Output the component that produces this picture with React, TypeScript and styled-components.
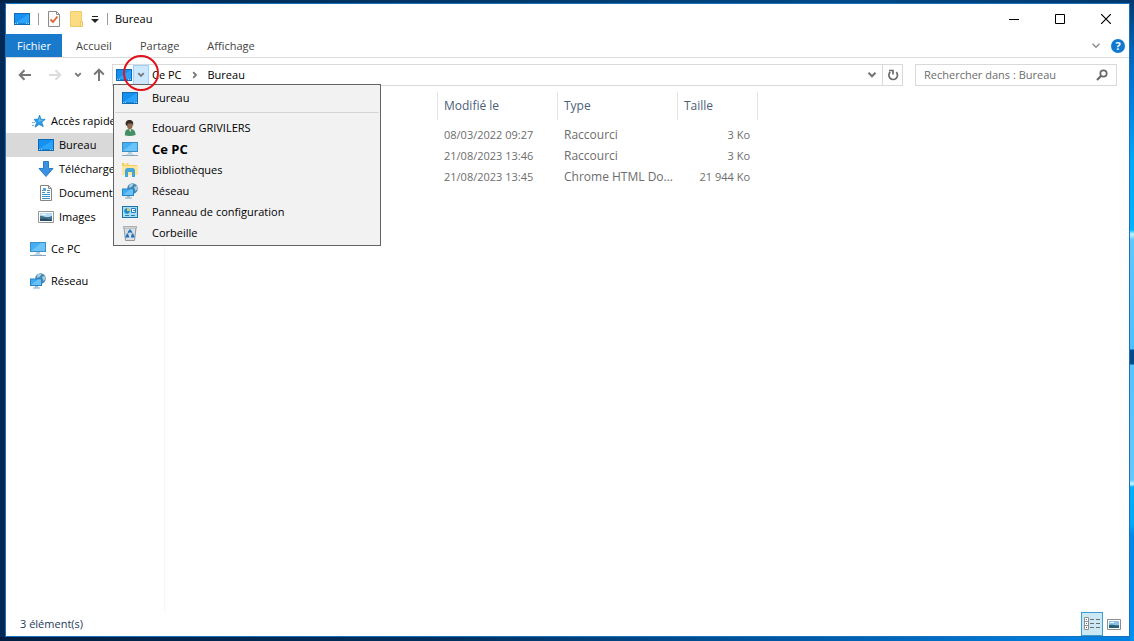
import React from 'react';
import styled, { createGlobalStyle, css } from 'styled-components';

const GlobalStyle = createGlobalStyle`
  *, *::before, *::after { box-sizing: border-box; }
  body {
    margin: 0;
    font-family: "Open Sans", "Noto Sans", sans-serif;
    font-size: 11px;
    line-height: 20px;
    color: #000;
  }
  button, input { font: inherit; color: inherit; }
  svg { display: block; flex: none; }
`;

/* ---------- icons ---------- */

const Svg = ({ w = 16, h = 16, children, box }: { w?: number; h?: number; box?: string; children: React.ReactNode }) => (
  <svg width={w} height={h} viewBox={box ?? `0 0 ${w} ${h}`} fill="none" aria-hidden="true">{children}</svg>
);

const DesktopIcon = () => (
  <Svg>
    <path d="M0 2h16v12H0z" fill="#0f6cb4" />
    <path d="M1 3h14v9H1z" fill="#1690f0" />
    <path d="M1 12L15 3v9z" fill="#2ba3fa" />
    <path d="M1 12.500h14" stroke="#1b86d6" />
    <path d="M1 12.500h1M3 12.500h1M12 12.500h1M14 12.500h1" stroke="#9fd6fb" />
  </Svg>
);

const MonitorIcon = () => (
  <Svg>
    <path d="M0 1h16v10H0z" fill="#3c8fc4" />
    <path d="M1 2h14v8H1z" fill="#45aef4" />
    <path d="M1 10L11 2h4v8z" fill="#6bc3fa" />
    <path d="M6 11h4v2H6z" fill="#b7d0de" />
    <path d="M4 13.500h8" stroke="#c8dbe5" />
    <path d="M0 14.500h16" stroke="#86a8bf" />
  </Svg>
);

const StarIcon = () => (
  <Svg>
    <path d="M9.600 2l1.200 4.200 4.400.2-3.500 2.600 1.600 4.600-4.200-2.200-4 2.800 1.400-4.500L4.200 6.400l4-.3z" fill="#2c9de8" stroke="#1e80c6" strokeWidth=".8" />
    <path d="M9.400 4l.8 2.800 3 .3-5 2z" fill="#67c3fa" />
    <path d="M2 9.500h3M2 12.500h2" stroke="#77b9e5" />
  </Svg>
);

const DownloadIcon = () => (
  <Svg>
    <path d="M5.500 .5h5v7h4.500L8 15.500 1 7.500h4.500z" fill="#3b90df" stroke="#2b7bcb" />
  </Svg>
);

const DocumentIcon = () => (
  <Svg>
    <path d="M2.500 .5h8l3 3v12h-11z" fill="#fff" stroke="#858585" />
    <path d="M10.500 .5v3h3" stroke="#858585" />
    <path d="M4 5.500h3M9 5.500h3M4 7.500h3M9 7.500h3M4 9.500h8M4 11.500h8M4 13.500h8" stroke="#3f94cb" />
    <path d="M5 3h3v3H5z" fill="#59a9d8" />
  </Svg>
);

const ImageIcon = () => (
  <Svg>
    <path d="M.5 2.500h15v11H.5z" fill="#fff" stroke="#979797" />
    <path d="M2 4h12v8H2z" fill="#b7dcf3" />
    <path d="M2 7c3-1 4 1 6 1s4 0 6-1v5H2z" fill="#42728d" />
    <path d="M2 10c4-1 8 0 12 1v1H2z" fill="#274f6b" />
    <path d="M3 5h5v1H3z" fill="#effaff" />
  </Svg>
);

const NetworkIcon = () => (
  <Svg>
    <circle cx="10.500" cy="5.500" r="5.300" fill="#4a88b0" />
    <path d="M7 2.500c2-2 3.500-1.700 4.500-1.500L10 3.500 7.500 5zM12 4l3-1 .5 3-2 2z" fill="#a7d0e5" />
    <path d="M0 5.500h12v7.500H0z" fill="#2883c2" />
    <path d="M1 6.500h10V12H1z" fill="#3fabf2" />
    <path d="M1 12l7-5.500h3V12z" fill="#68c1f9" />
    <path d="M5 13h3v1.500H5z" fill="#9cbdd1" />
    <path d="M3 15h7" stroke="#82a6bd" />
  </Svg>
);

const UserIcon = () => (
  <Svg>
    <path d="M3 15.500c-.4-4 .6-6 3.500-6.500h3c3 .5 4 2.500 4 6 -3 1-7 1.200-10.500.5z" fill="#429064" />
    <path d="M6 8h3.500l-1 4z" fill="#e6e7df" />
    <path d="M5 2h5.500v4.500c-.5 2-1.500 3-2.800 3S5.300 8 5 6z" fill="#93694f" />
    <path d="M3.800 5C3 1.500 5 0 7.500 0S12 1.500 11 6l-1-2.500H6L5 6z" fill="#392d28" />
  </Svg>
);

const LibraryIcon = () => (
  <Svg>
    <path d="M0 1h6l1 2h8v10H0z" fill="#f4cd60" />
    <path d="M0 4h16v9H0z" fill="#ffe59a" />
    <path d="M2 2h3" stroke="#fff" />
    <path d="M3 15V8.500C3 7 4 6 5.500 6h5C12 6 13 7 13 8.500V15h-3v-5H6v5z" fill="#40a6dc" />
  </Svg>
);

const ControlPanelIcon = () => (
  <Svg>
    <path d="M0 2h16v12H0z" fill="#1b75ac" />
    <path d="M1 3h14v10H1z" fill="#a9dcf5" />
    <circle cx="5" cy="7" r="2.700" fill="#1689cf" />
    <path d="M5 7V4.300A2.700 2.700 0 0 1 7.700 7z" fill="#ffc643" />
    <path d="M9.500 4.500h4v4h-4z" fill="#f1fbff" stroke="#267fb4" />
    <path d="M11 6.500h2M3 11.500h4M9 11.500h4" stroke="#267fb4" />
  </Svg>
);

const BinIcon = () => (
  <Svg>
    <path d="M2 2.500h12L12.500 15.500h-9z" fill="#dadfe3" stroke="#92989c" />
    <path d="M1.500 1.500h13v1.500h-13z" fill="#f7f8f8" stroke="#989da0" strokeWidth=".8" />
    <path d="M6.200 7.800L8 5.500l1.800 2.300M5.800 8.700L4.500 11.500h2.600M10.200 8.700l1.300 2.800H9" stroke="#1d74bd" strokeWidth="1.800" />
  </Svg>
);

const PropertiesIcon = () => (
  <Svg w={14}>
    <path d="M1.500 .5h8l3 3v12h-11z" fill="#fbfbfb" stroke="#8b8b8b" />
    <path d="M9.500 .5v3h3" stroke="#8b8b8b" />
    <path d="M3.500 8.500L6 11l4.500-5.500" stroke="#dc6232" strokeWidth="1.800" />
  </Svg>
);

const FolderIcon = () => (
  <Svg w={14}>
    <path d="M1.500 .5h11v10h1v5h-12z" fill="#fbdc82" stroke="#f0cb68" />
    <path d="M11.500 15.500v-4.500h2v4.500z" fill="#fff1bc" stroke="#e8bf53" strokeWidth=".8" />
  </Svg>
);

const CustomizeIcon = () => (
  <Svg w={8} h={8}>
    <path d="M1 1.500h6" stroke="#222" />
    <path d="M0 4h8L4 8z" fill="#222" />
  </Svg>
);

const ArrowIcon = ({ dir, color = '#777' }: { dir: 'left' | 'right' | 'up'; color?: string }) => (
  <Svg w={14} h={14}>
    <path
      transform={dir === 'right' ? 'rotate(180 7 7)' : dir === 'up' ? 'rotate(90 7 7)' : undefined}
      d="M13 7H2M6.500 2.200L1.700 7l4.800 4.800"
      stroke={color}
      strokeWidth="2"
    />
  </Svg>
);

const Chevron = ({ size = 8, color = '#777', weight = 1.8, right = false }: { size?: number; color?: string; weight?: number; right?: boolean }) => (
  <Svg w={size} h={size} box="0 0 8 8">
    <path transform={right ? 'rotate(-90 4 4)' : undefined} d="M1.200 2.200L4 5l2.800-2.800" stroke={color} strokeWidth={weight} />
  </Svg>
);

const RefreshIcon = () => (
  <Svg w={12} h={12}>
    <path d="M9.300 3.200A4.300 4.300 0 1 1 3.300 3" stroke="#6b6b6b" strokeWidth="1.700" />
    <path d="M2 1.500h4v4" stroke="#6b6b6b" strokeWidth="1.700" />
  </Svg>
);

const SearchIcon = () => (
  <Svg w={12} h={12}>
    <circle cx="7.500" cy="4.500" r="3.200" stroke="#666" strokeWidth="1.700" />
    <path d="M5.200 6.800L1 11" stroke="#666" strokeWidth="2" />
  </Svg>
);

const DetailsIcon = () => (
  <Svg h={14}>
    <path d="M.5 .5h4v12h-4zM.5 4.500h4M.5 8.500h4" fill="#fff" stroke="#909090" />
    <path d="M2 2.500h1M2 6.500h1" stroke="#4b7196" />
    <path d="M2 10.500h1" stroke="#b44141" />
    <path d="M6 2.500h4M12 2.500h4M6 6.500h4M12 6.500h4M6 10.500h4M12 10.500h4" stroke="#6e6e6e" />
  </Svg>
);

const ThumbnailIcon = () => (
  <Svg w={14} h={11}>
    <path d="M.5 .5h13v10H.5z" fill="#fff" stroke="#8d8d8d" />
    <path d="M2 2h10v7H2z" fill="#8ac2ed" />
    <path d="M2 6c4-1 6 1 10 0v3H2z" fill="#286078" />
    <path d="M3 3h4v1H3z" fill="#f2fbff" />
  </Svg>
);

/* ---------- frame ---------- */

const Desktop = styled.div`
  display: flex;
  min-height: 100vh;
  padding: 3px 4px 4px 5px;
  background:
    linear-gradient(#003a70, #0063b5 50px, #0078d7 90px, #00a8f8 160px, #00b4ff 230px, #c5f3ff 234px, #62c6ff 240px, #4cc0ff 349px, #074a8c 350px, #074a8c 364px, #55c4ff 365px, #66c5ff 480px, #d2f6ff 484px, #00b0fa 487px, #00a8f5 525px, #0088e8 535px, #0090f0) right / 4px 100% no-repeat,
    linear-gradient(90deg, #001f42, #00305f 40%, #0058a5 70%, #0080e0 95%) bottom / 100% 4px no-repeat,
    linear-gradient(90deg, #00254a, #003c70 50%, #004a88 75%, #00386c) top / 100% 3px no-repeat,
    #002a55;
`;

const Window = styled.main`
  display: flex;
  flex: 1;
  flex-direction: column;
  min-width: 0;
  background: #fff;
  border: 1px solid #1a72bd;
`;

const TitleBar = styled.header`
  display: flex;
  align-items: center;
  height: 30px;
  padding-left: 8px;
`;

const QuickTools = styled.div`
  display: flex;
  align-items: center;
  gap: 8px;
`;

const Separator = styled.span`
  width: 1px;
  height: 12px;
  background: #999;
`;

const PlainButton = styled.button`
  display: flex;
  align-items: center;
  justify-content: center;
  padding: 0;
  background: none;
  border: 0;
`;

const Title = styled.h1`
  margin: 0 0 0 7px;
  font-size: 11px;
  font-weight: 400;
`;

const WindowControls = styled.div`
  display: flex;
  margin-left: auto;
`;

const ControlButton = styled(PlainButton)`
  width: 46px;
  height: 28px;
`;

const Ribbon = styled.nav`
  display: flex;
  align-items: center;
  height: 24px;
  border-bottom: 1px solid #dadbdc;
`;

const Tab = styled.button<{ $active?: boolean }>`
  height: 23px;
  padding: 0 14px;
  border: 0;
  background: none;
  color: #444;
  line-height: 23px;
  ${p => p.$active && css`
    padding: 0 11px;
    background: #1979ca;
    color: #fff;
  `}
`;

const RibbonEnd = styled.div`
  display: flex;
  align-items: center;
  gap: 10px;
  margin-left: auto;
  padding-right: 4px;
`;

const HelpButton = styled(PlainButton)`
  width: 14px;
  height: 14px;
  border-radius: 50%;
  background: #0f78d0;
  color: #fff;
  font-weight: 700;
  line-height: 14px;
`;

const NavBar = styled.div`
  display: flex;
  align-items: center;
  height: 34px;
  padding: 0 12px;
`;

const History = styled.div`
  display: flex;
  align-items: center;
  width: 94px;
`;

const HistoryButton = styled(PlainButton)<{ $w: number }>`
  width: ${p => p.$w}px;
  height: 22px;
  justify-content: flex-start;
`;

const AddressBar = styled.div`
  position: relative;
  display: flex;
  flex: 1;
  align-items: center;
  height: 22px;
  padding-left: 3px;
  border: 1px solid #d9d9d9;
`;

const RootButton = styled(PlainButton)`
  width: 16px;
  height: 20px;
  margin-left: 1px;
  background: #cce8ff;
  border: 1px solid #99d1ff;
`;

const Crumbs = styled.div`
  display: flex;
  align-items: center;
  gap: 9px;
  margin-left: 3px;
`;

const Crumb = styled.a`
  color: inherit;
  text-decoration: none;
`;

const AddressEnd = styled.div`
  display: flex;
  margin-left: auto;
`;

const AddressButton = styled(PlainButton)<{ $divided?: boolean }>`
  width: 20px;
  height: 20px;
  border-left: ${p => (p.$divided ? '1px solid #d9d9d9' : '0')};
`;

const SearchBox = styled.label`
  display: flex;
  align-items: center;
  width: 202px;
  height: 22px;
  margin-left: 12px;
  padding: 0 8px;
  border: 1px solid #d9d9d9;
`;

const SearchInput = styled.input`
  flex: 1;
  min-width: 0;
  padding: 0;
  border: 0;
  outline: 0;
  background: none;
  &::placeholder { color: #6d6d6d; opacity: 1; }
`;

const Highlight = styled.span`
  position: absolute;
  z-index: 3;
  top: -10px;
  left: 10px;
  width: 36px;
  height: 36px;
  border: 2px solid #e0121c;
  border-radius: 50%;
  pointer-events: none;
`;

const Menu = styled.ul`
  position: absolute;
  z-index: 2;
  top: 19px;
  left: 0;
  width: 268px;
  margin: 0;
  padding: 2px 1px;
  list-style: none;
  background: #f2f2f2;
  border: 1px solid #646464;
`;

const MenuRow = styled.li<{ $first?: boolean }>`
  ${p => p.$first && css`
    margin-bottom: 4px;
    padding-bottom: 4px;
    border-bottom: 1px solid #d4d4d4;
  `}
`;

const MenuButton = styled.button<{ $strong?: boolean }>`
  display: flex;
  align-items: center;
  gap: 14px;
  width: 100%;
  height: 21px;
  padding: 0 7px;
  border: 0;
  background: none;
  ${p => p.$strong && css`
    font-size: 13px;
    font-weight: 700;
  `}
`;

/* ---------- content ---------- */

const Content = styled.div`
  display: flex;
  flex: 1;
`;

const Sidebar = styled.nav`
  width: 159px;
  padding-top: 17px;
  border-right: 1px solid #f6f6f6;
`;

const SideGroup = styled.ul`
  margin: 0 0 8px;
  padding: 0;
  list-style: none;
`;

const SideLink = styled.a<{ $child?: boolean; $selected?: boolean }>`
  display: flex;
  align-items: center;
  gap: 5px;
  height: 24px;
  padding-left: ${p => (p.$child ? 32 : 24)}px;
  overflow: hidden;
  background: ${p => (p.$selected ? '#d9d9d9' : 'transparent')};
  color: inherit;
  text-decoration: none;
  white-space: nowrap;
`;

const Files = styled.section`
  flex: 1;
  min-width: 0;
`;

const FileTable = styled.table`
  width: 593px;
  table-layout: fixed;
  border-collapse: separate;
  border-spacing: 0;
  color: #6d6d6d;
`;

const HeadCell = styled.th`
  height: 28px;
  padding: 0 6px;
  border-right: 1px solid #e5e5e5;
  color: #4c607a;
  font-size: 12px;
  font-weight: 400;
  text-align: left;
`;

const Body = styled.tbody`
  &::before { content: ''; display: block; height: 4px; }
`;

const Cell = styled.td<{ $kind?: 'text' | 'number' }>`
  height: 21px;
  padding: 0 8px 0 6px;
  font-size: ${p => (p.$kind === 'text' ? 12 : 11)}px;
  text-align: ${p => (p.$kind === 'number' ? 'right' : 'left')};
  white-space: nowrap;
`;

const StatusBar = styled.footer`
  display: flex;
  align-items: center;
  height: 24px;
  padding: 0 4px 0 14px;
  color: #1e395b;
`;

const ViewButtons = styled.div`
  display: flex;
  margin-left: auto;
`;

const ViewButton = styled(PlainButton)<{ $active?: boolean }>`
  width: 22px;
  height: 24px;
  background: ${p => (p.$active ? '#cce8f5' : 'none')};
  border: ${p => (p.$active ? '1px solid #3a9ed0' : '0')};
`;

/* ---------- data ---------- */

const menuItems = [
  { label: 'Bureau', icon: <DesktopIcon /> },
  { label: 'Edouard GRIVILERS', icon: <UserIcon /> },
  { label: 'Ce PC', icon: <MonitorIcon />, strong: true },
  { label: 'Bibliothèques', icon: <LibraryIcon /> },
  { label: 'Réseau', icon: <NetworkIcon /> },
  { label: 'Panneau de configuration', icon: <ControlPanelIcon /> },
  { label: 'Corbeille', icon: <BinIcon /> },
];

const sideGroups = [
  [
    { label: 'Accès rapide', icon: <StarIcon /> },
    { label: 'Bureau', icon: <DesktopIcon />, child: true, selected: true },
    { label: 'Téléchargements', icon: <DownloadIcon />, child: true },
    { label: 'Documents', icon: <DocumentIcon />, child: true },
    { label: 'Images', icon: <ImageIcon />, child: true },
  ],
  [{ label: 'Ce PC', icon: <MonitorIcon /> }],
  [{ label: 'Réseau', icon: <NetworkIcon /> }],
];

const files = [
  { date: '08/03/2022 09:27', type: 'Raccourci', size: '3 Ko' },
  { date: '21/08/2023 13:46', type: 'Raccourci', size: '3 Ko' },
  { date: '21/08/2023 13:45', type: 'Chrome HTML Do...', size: '21 944 Ko' },
];

export default function App() {
  return (
    <Desktop>
      <GlobalStyle />
      <Window>
        <TitleBar>
          <QuickTools>
            <DesktopIcon />
            <Separator />
            <PlainButton aria-label="Propriétés"><PropertiesIcon /></PlainButton>
            <PlainButton aria-label="Nouveau dossier"><FolderIcon /></PlainButton>
            <PlainButton aria-label="Personnaliser"><CustomizeIcon /></PlainButton>
            <Separator />
          </QuickTools>
          <Title>Bureau</Title>
          <WindowControls>
            <ControlButton aria-label="Réduire"><Svg w={10} h={10}><path d="M0 5.500h10" stroke="#000" /></Svg></ControlButton>
            <ControlButton aria-label="Agrandir"><Svg w={10} h={10}><path d="M.5 .5h9v9h-9z" stroke="#000" /></Svg></ControlButton>
            <ControlButton aria-label="Fermer"><Svg w={10} h={10}><path d="M0 0l10 10M10 0L0 10" stroke="#000" strokeWidth="1.200" /></Svg></ControlButton>
          </WindowControls>
        </TitleBar>
        <Ribbon>
          <Tab $active>Fichier</Tab>
          <Tab>Accueil</Tab>
          <Tab>Partage</Tab>
          <Tab>Affichage</Tab>
          <RibbonEnd>
            <PlainButton aria-label="Développer le ruban"><Chevron size={10} color="#888" weight={1} /></PlainButton>
            <HelpButton aria-label="Aide">?</HelpButton>
          </RibbonEnd>
        </Ribbon>
        <NavBar>
          <History>
            <HistoryButton $w={30} aria-label="Précédent"><ArrowIcon dir="left" /></HistoryButton>
            <HistoryButton $w={26} aria-label="Suivant"><ArrowIcon dir="right" color="#dcdcdc" /></HistoryButton>
            <HistoryButton $w={18} aria-label="Emplacements récents"><Chevron /></HistoryButton>
            <HistoryButton $w={20} aria-label="Dossier parent"><ArrowIcon dir="up" /></HistoryButton>
          </History>
          <AddressBar>
            <DesktopIcon />
            <RootButton aria-label="Emplacements" aria-expanded="true"><Chevron /></RootButton>
            <Crumbs>
              <Crumb href="#pc">Ce PC</Crumb>
              <Chevron right />
              <Crumb href="#bureau">Bureau</Crumb>
            </Crumbs>
            <AddressEnd>
              <AddressButton aria-label="Emplacements précédents"><Chevron size={10} /></AddressButton>
              <AddressButton $divided aria-label="Actualiser"><RefreshIcon /></AddressButton>
            </AddressEnd>
            <Menu>
              {menuItems.map((item, i) => (
                <MenuRow key={item.label} $first={i === 0}>
                  <MenuButton $strong={item.strong}>{item.icon}{item.label}</MenuButton>
                </MenuRow>
              ))}
            </Menu>
            <Highlight />
          </AddressBar>
          <SearchBox>
            <SearchInput type="text" aria-label="Rechercher" placeholder="Rechercher dans : Bureau" />
            <SearchIcon />
          </SearchBox>
        </NavBar>
        <Content>
          <Sidebar>
            {sideGroups.map((group, i) => (
              <SideGroup key={i}>
                {group.map(item => (
                  <li key={item.label}>
                    <SideLink href="#" $child={'child' in item} $selected={'selected' in item}>{item.icon}{item.label}</SideLink>
                  </li>
                ))}
              </SideGroup>
            ))}
          </Sidebar>
          <Files>
            <FileTable>
              <colgroup>
                <col />
                <col width="120" />
                <col width="120" />
                <col width="80" />
              </colgroup>
              <thead>
                <tr>
                  <HeadCell />
                  <HeadCell>Modifié le</HeadCell>
                  <HeadCell>Type</HeadCell>
                  <HeadCell>Taille</HeadCell>
                </tr>
              </thead>
              <Body>
                {files.map(file => (
                  <tr key={file.date}>
                    <Cell />
                    <Cell>{file.date}</Cell>
                    <Cell $kind="text">{file.type}</Cell>
                    <Cell $kind="number">{file.size}</Cell>
                  </tr>
                ))}
              </Body>
            </FileTable>
          </Files>
        </Content>
        <StatusBar>
          3 élément(s)
          <ViewButtons>
            <ViewButton $active aria-label="Détails"><DetailsIcon /></ViewButton>
            <ViewButton aria-label="Grandes icônes"><ThumbnailIcon /></ViewButton>
          </ViewButtons>
        </StatusBar>
      </Window>
    </Desktop>
  );
}
